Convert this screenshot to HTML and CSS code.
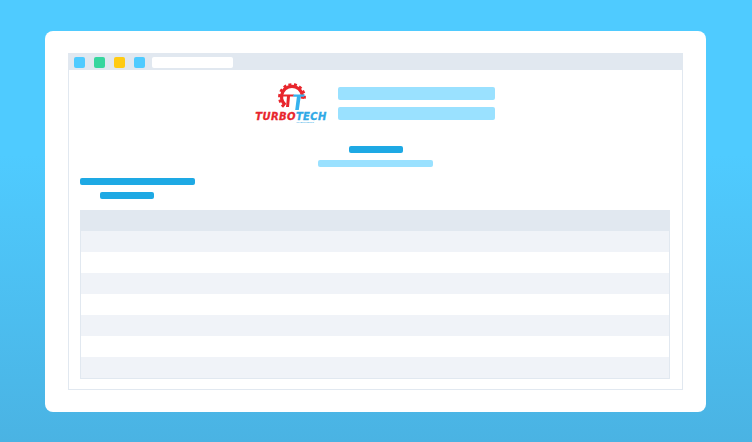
FILE: index.html
```html
<!DOCTYPE html>
<html lang="en">
<head>
    <meta charset="UTF-8">
    <meta name="viewport" content="width=device-width, initial-scale=1.0">
    <title>TurboTech</title>
    <link rel="stylesheet" href="styles.css">
</head>
<body>
    <div class="card">
        <div class="window">
            <div class="toolbar">
                <span class="dot dot-blue"></span>
                <span class="dot dot-green"></span>
                <span class="dot dot-yellow"></span>
                <span class="dot dot-blue"></span>
                <span class="address"></span>
            </div>
            <div class="content">
                <div class="top">
                    <div class="logo">
                        <svg class="logo-mark" width="28" height="30" viewBox="0 0 28 30">
                            <path d="M7.300 22A10.500 10.500 0 1 1 24.300 15.800" fill="none" stroke="#e8262d" stroke-width="3.200"/>
                            <path d="M5.900 23.700A12.600 12.600 0 1 1 26.400 16.200" fill="none" stroke="#e8262d" stroke-width="2.600" stroke-dasharray="3 2.400"/>
                            <path d="M4.500 11.500h11.500l-.5 2h-3.500l-1 10.500H8l1-10.500H4z" fill="#e8262d"/>
                            <path d="M15.500 11.500H27l-1 2.200h-3.300L20.800 27h-3.600l1.700-13.300h-3.600z" fill="#35b2ee"/>
                        </svg>
                        <div class="logo-name"><span class="red">TURBO</span><span class="blue">TECH</span></div>
                        <div class="logo-sub">INVESTMENTS</div>
                    </div>
                    <div class="top-bars">
                        <div class="bar bar-light bar-tall"></div>
                        <div class="bar bar-light bar-tall"></div>
                    </div>
                </div>
                <div class="center">
                    <div class="bar bar-dark bar-short bar-nudge"></div>
                    <div class="bar bar-light bar-long"></div>
                </div>
                <div class="left">
                    <div class="bar bar-dark bar-long"></div>
                    <div class="bar bar-dark bar-short bar-indent"></div>
                </div>
                <div class="table">
                    <div class="row row-head"></div>
                    <div class="row row-alt"></div>
                    <div class="row"></div>
                    <div class="row row-alt"></div>
                    <div class="row"></div>
                    <div class="row row-alt"></div>
                    <div class="row"></div>
                    <div class="row row-alt"></div>
                </div>
            </div>
        </div>
    </div>
</body>
</html>
```

FILE: styles.css
```css
body {
    margin: 0;
    height: 442px;
    box-sizing: border-box;
    padding: 31px 46px 30px 45px;
    background: linear-gradient(#4fcbff 0%, #4fcbff 35%, #4ab3e3 100%);
    font-family: "Liberation Sans", Arial, sans-serif;
    overflow: hidden;
}
.card {
    height: 381px;
    box-sizing: border-box;
    padding: 22px 23px 22px 23px;
    background-color: white;
    border-radius: 8px;
}
.window {
    height: 337px;
    box-sizing: border-box;
    border: 1px solid #e1e8f0;
    border-top: none;
}
.toolbar {
    display: flex;
    align-items: flex-start;
    gap: 9px;
    height: 17px;
    margin: 0 -1px;
    padding: 4px 5px 0 6px;
    box-sizing: border-box;
    background-color: #e1e8f0;
}
.dot {
    width: 11px;
    height: 11px;
    border-radius: 2px;
}
.dot-blue { background-color: #4fcbff; }
.dot-green { background-color: #36d69e; }
.dot-yellow { background-color: #ffcb14; }
.address {
    width: 81px;
    height: 11px;
    margin-left: -2px;
    border-radius: 2px;
    background-color: white;
}
.content {
    padding: 13px 12px 0 11px;
}
.top {
    display: flex;
    justify-content: center;
    gap: 11px;
}
.logo {
    width: 72px;
    height: 41px;
    display: flex;
    flex-direction: column;
    align-items: center;
}
.logo-mark {
    display: block;
    margin-left: 2px;
}
.logo-name {
    font-family: "DejaVu Sans", sans-serif;
    font-size: 10px;
    line-height: 8px;
    font-weight: bold;
    font-style: italic;
    letter-spacing: 0.35px;
    white-space: nowrap;
    -webkit-text-stroke: 0.3px;
}
.red { color: #e8262d; }
.blue { color: #2fa9e6; }
.logo-sub {
    align-self: flex-end;
    margin-right: 13px;
    font-size: 2.5px;
    line-height: 3px;
    white-space: nowrap;
    color: #2fa9e6;
}
.top-bars {
    display: flex;
    flex-direction: column;
    gap: 7px;
    padding-top: 4px;
}
.bar {
    border-radius: 2px;
}
.bar-tall {
    width: 157px;
    height: 13px;
}
.bar-light { background-color: #9ae1ff; }
.bar-dark { background-color: #1ea9e4; }
.bar-short {
    width: 54px;
    height: 7px;
}
.bar-long {
    width: 115px;
    height: 7px;
}
.bar-indent {
    margin-left: 20px;
}
.bar-nudge {
    margin-left: 2px;
}
.center {
    display: flex;
    flex-direction: column;
    align-items: center;
    gap: 7px;
    margin-top: 22px;
}
.left {
    display: flex;
    flex-direction: column;
    gap: 7px;
    margin-top: 11px;
}
.table {
    margin-top: 11px;
    border: 1px solid #e1e8f0;
    border-top: none;
}
.row {
    height: 21px;
}
.row-head {
    margin: 0 -1px;
    background-color: #e1e8f0;
}
.row-alt {
    background-color: #f0f3f8;
}
```
